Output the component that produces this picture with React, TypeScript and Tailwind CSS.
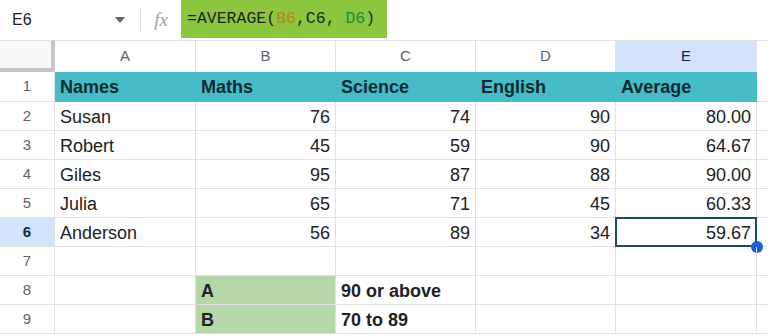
import React from "react";

const COLS = ["A", "B", "C", "D", "E"];

type Cell = { v: string; right?: boolean; bold?: boolean; bg?: string };

const rows: Cell[][] = [
  [
    { v: "Names", bold: true },
    { v: "Maths", bold: true },
    { v: "Science", bold: true },
    { v: "English", bold: true },
    { v: "Average", bold: true },
  ],
  ...[
    ["Susan", "76", "74", "90", "80.00"],
    ["Robert", "45", "59", "90", "64.67"],
    ["Giles", "95", "87", "88", "90.00"],
    ["Julia", "65", "71", "45", "60.33"],
    ["Anderson", "56", "89", "34", "59.67"],
  ].map((r) => r.map((v, i) => ({ v, right: i > 0 }))),
  [{ v: "" }, { v: "" }, { v: "" }, { v: "" }, { v: "" }],
  [{ v: "" }, { v: "A", bold: true, bg: "bg-[#b6d7a8]" }, { v: "90 or above", bold: true }, { v: "" }, { v: "" }],
  [{ v: "" }, { v: "B", bold: true, bg: "bg-[#b6d7a8]" }, { v: "70 to 89", bold: true }, { v: "" }, { v: "" }],
];

export default function App() {
  return (
    <div className="w-[768px] h-[335px] overflow-hidden bg-white font-['Liberation_Sans',Arial,sans-serif] text-[#202124]">
      {/* Formula bar */}
      <div className="flex items-stretch h-[40px]">
        <div className="w-[112px] flex items-center pl-[12px] text-[16px] text-[#202124]">E6</div>
        <div className="w-[16px] flex items-center justify-center">
          <svg width="10" height="6" viewBox="0 0 10 6">
            <path d="M0 0h10L5 6z" fill="#5f6368" />
          </svg>
        </div>
        <div className="w-[12px]" />
        <div className="w-px my-[9px] bg-[#dadce0]" />
        <div className="w-[40px] flex items-center justify-center text-[19px] italic text-[#a0a0a0] font-['Liberation_Serif',serif]">
          fx
        </div>
        <div className="h-[38px] w-[206px] bg-[#8cc63f] flex items-center pl-[6px] font-['Liberation_Mono',monospace] text-[16.5px] text-[#1f1f1f] whitespace-pre">
          =AVERAGE(<span className="text-[#b0891a]">B6</span>,C6, <span className="text-[#1c8a3a]">D6</span>)
        </div>
      </div>

      {/* Grid */}
      <div className="grid grid-cols-[55px_141px_140px_140px_140px_141px_11px] grid-rows-[32px_30px_repeat(8,29px)]">
        <div className="bg-[#f8f9fa] border-b-[4px] border-r-[4px] border-[#c4c7c5] border-t border-t-[#e1e1e1]" />
        {COLS.map((c) => (
          <div
            key={c}
            className={`flex items-center justify-center text-[15px] border-t border-r border-[#e1e1e1] ${
              c === "E" ? "bg-[#d3e3fd] text-[#0b2a4a]" : "text-[#5f6368]"
            }`}
          >
            {c}
          </div>
        ))}
        <div className="border-t border-[#e1e1e1]" />

        {rows.map((r, ri) => (
          <React.Fragment key={ri}>
            <div
              className={`flex items-center justify-center text-[15px] border-b border-r border-[#e1e1e1] ${
                ri === 5 ? "bg-[#d3e3fd] text-[#0b2a4a] font-bold" : "text-[#5f6368]"
              }`}
            >
              {ri + 1}
            </div>
            {r.map((cell, ci) => {
              const header = ri === 0;
              const selected = ri === 5 && ci === 4;
              return (
                <div
                  key={ci}
                  className={`relative flex items-center px-[5px] pt-[2px] text-[18px] border-b border-r ${
                    header ? "bg-[#46bdc6] border-[#46bdc6] text-[#0c2a33]" : "border-[#e1e1e1]"
                  } ${cell.bg ?? ""} ${cell.right ? "justify-end" : ""} ${cell.bold ? "font-bold" : ""}`}
                >
                  {cell.v}
                  {selected && (
                    <>
                      <div className="absolute -left-px -top-px -right-px -bottom-px border-2 border-[#1b4e5c]" />
                      <div className="absolute -right-[7px] -bottom-[7px] w-[12px] h-[12px] rounded-full bg-[#1a5fd6]" />
                    </>
                  )}
                </div>
              );
            })}
            <div className="border-b border-[#e1e1e1]" />
          </React.Fragment>
        ))}
      </div>
    </div>
  );
}
